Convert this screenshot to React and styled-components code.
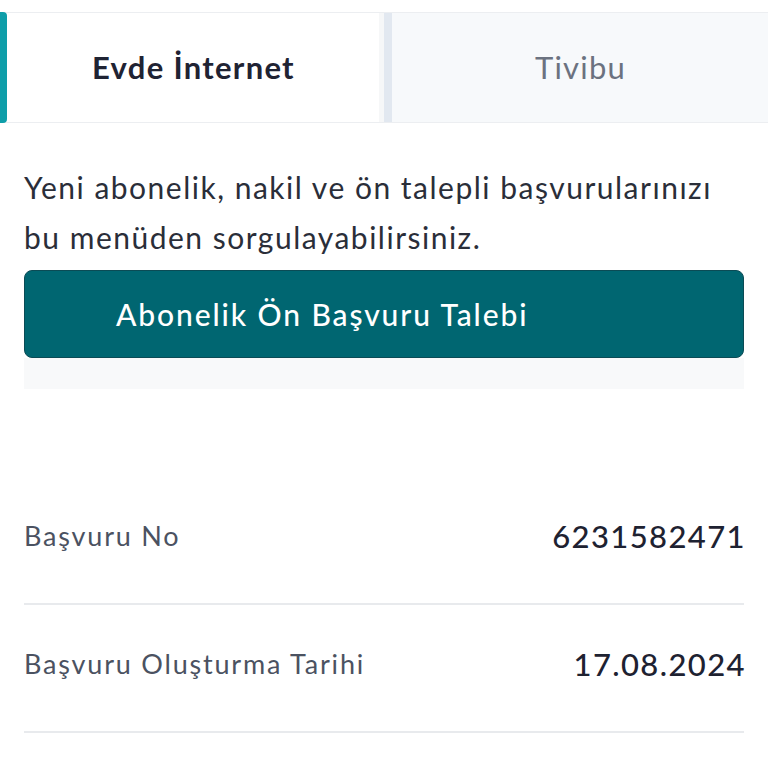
import React from "react";
import styled, { createGlobalStyle } from "styled-components";

const Global = createGlobalStyle`
  body {
    margin: 0;
    background: #ffffff;
    font-family: Lato, "Noto Sans", sans-serif;
  }
`;

const Page = styled.div`
  width: 768px;
  padding-top: 12px;
`;

const Tabs = styled.div`
  display: flex;
  height: 111px;
  border-top: 1px solid #eceef1;
  border-bottom: 1px solid #eceef1;
  box-sizing: border-box;
`;

const Tab = styled.div`
  position: relative;
  box-sizing: border-box;
  width: 50%;
  display: flex;
  align-items: center;
  justify-content: center;
  padding: 0 0 1px ${(p) => (p.active ? "8px" : "1px")};
  font-size: 31px;
  letter-spacing: ${(p) => (p.active ? "1.3px" : "1.2px")};
  font-weight: ${(p) => (p.active ? 700 : 400)};
  color: ${(p) => (p.active ? "#1f2333" : "#6b7280")};
  background: ${(p) => (p.active ? "#ffffff" : "#f7f9fb")};
  border-left: ${(p) => (p.active ? "none" : "8px solid #e2e8f0")};
  border-right: ${(p) => (p.active ? "5px solid #f6f7f8" : "none")};

  &::before {
    content: "";
    display: ${(p) => (p.active ? "block" : "none")};
    position: absolute;
    left: 0;
    top: -1px;
    bottom: -1px;
    width: 7px;
    background: #0e9ea9;
    border-radius: 0 4px 4px 0;
  }
`;

const Content = styled.div`
  padding: 0 24px;
`;

const Intro = styled.p`
  margin: 39px 0 0;
  font-size: 30px;
  line-height: 50px;
  letter-spacing: 1.5px;
  color: #2a2e39;
`;

const PrimaryButton = styled.button`
  display: flex;
  align-items: center;
  width: 100%;
  height: 88px;
  margin-top: 8px;
  padding: 0 0 0 91px;
  box-sizing: border-box;
  background: #006671;
  border: 1px solid #0b4b55;
  border-radius: 8px;
  color: #ffffff;
  font-family: Lato, "Noto Sans", sans-serif;
  font-size: 30px;
  letter-spacing: 1.9px;
  font-weight: 500;
`;

const Shade = styled.div`
  height: 31px;
  background: #f8f9fa;
`;

const List = styled.div`
  margin-top: 88px;
`;

const Row = styled.div`
  display: flex;
  align-items: center;
  justify-content: space-between;
  height: 128px;
  padding-bottom: 9px;
  border-bottom: 2px solid #e8eaed;
  box-sizing: border-box;
`;

const Label = styled.span`
  font-size: 27px;
  letter-spacing: 1.8px;
  color: #4b5261;
`;

const Value = styled.span`
  margin-right: -2px;
  font-size: 31px;
  font-weight: 500;
  letter-spacing: 1.4px;
  color: #1e2231;
`;

const rows = [
  { label: "Başvuru No", value: "6231582471" },
  { label: "Başvuru Oluşturma Tarihi", value: "17.08.2024" },
];

const App = () => {
  return (
    <Page>
      <Global />
      <Tabs>
        <Tab active>Evde İnternet</Tab>
        <Tab>Tivibu</Tab>
      </Tabs>
      <Content>
        <Intro>
          Yeni abonelik, nakil ve ön talepli başvurularınızı bu menüden
          sorgulayabilirsiniz.
        </Intro>
        <PrimaryButton>Abonelik Ön Başvuru Talebi</PrimaryButton>
        <Shade />
        <List>
          {rows.map((r) => (
            <Row key={r.label}>
              <Label>{r.label}</Label>
              <Value>{r.value}</Value>
            </Row>
          ))}
        </List>
      </Content>
    </Page>
  );
};

export default App;
